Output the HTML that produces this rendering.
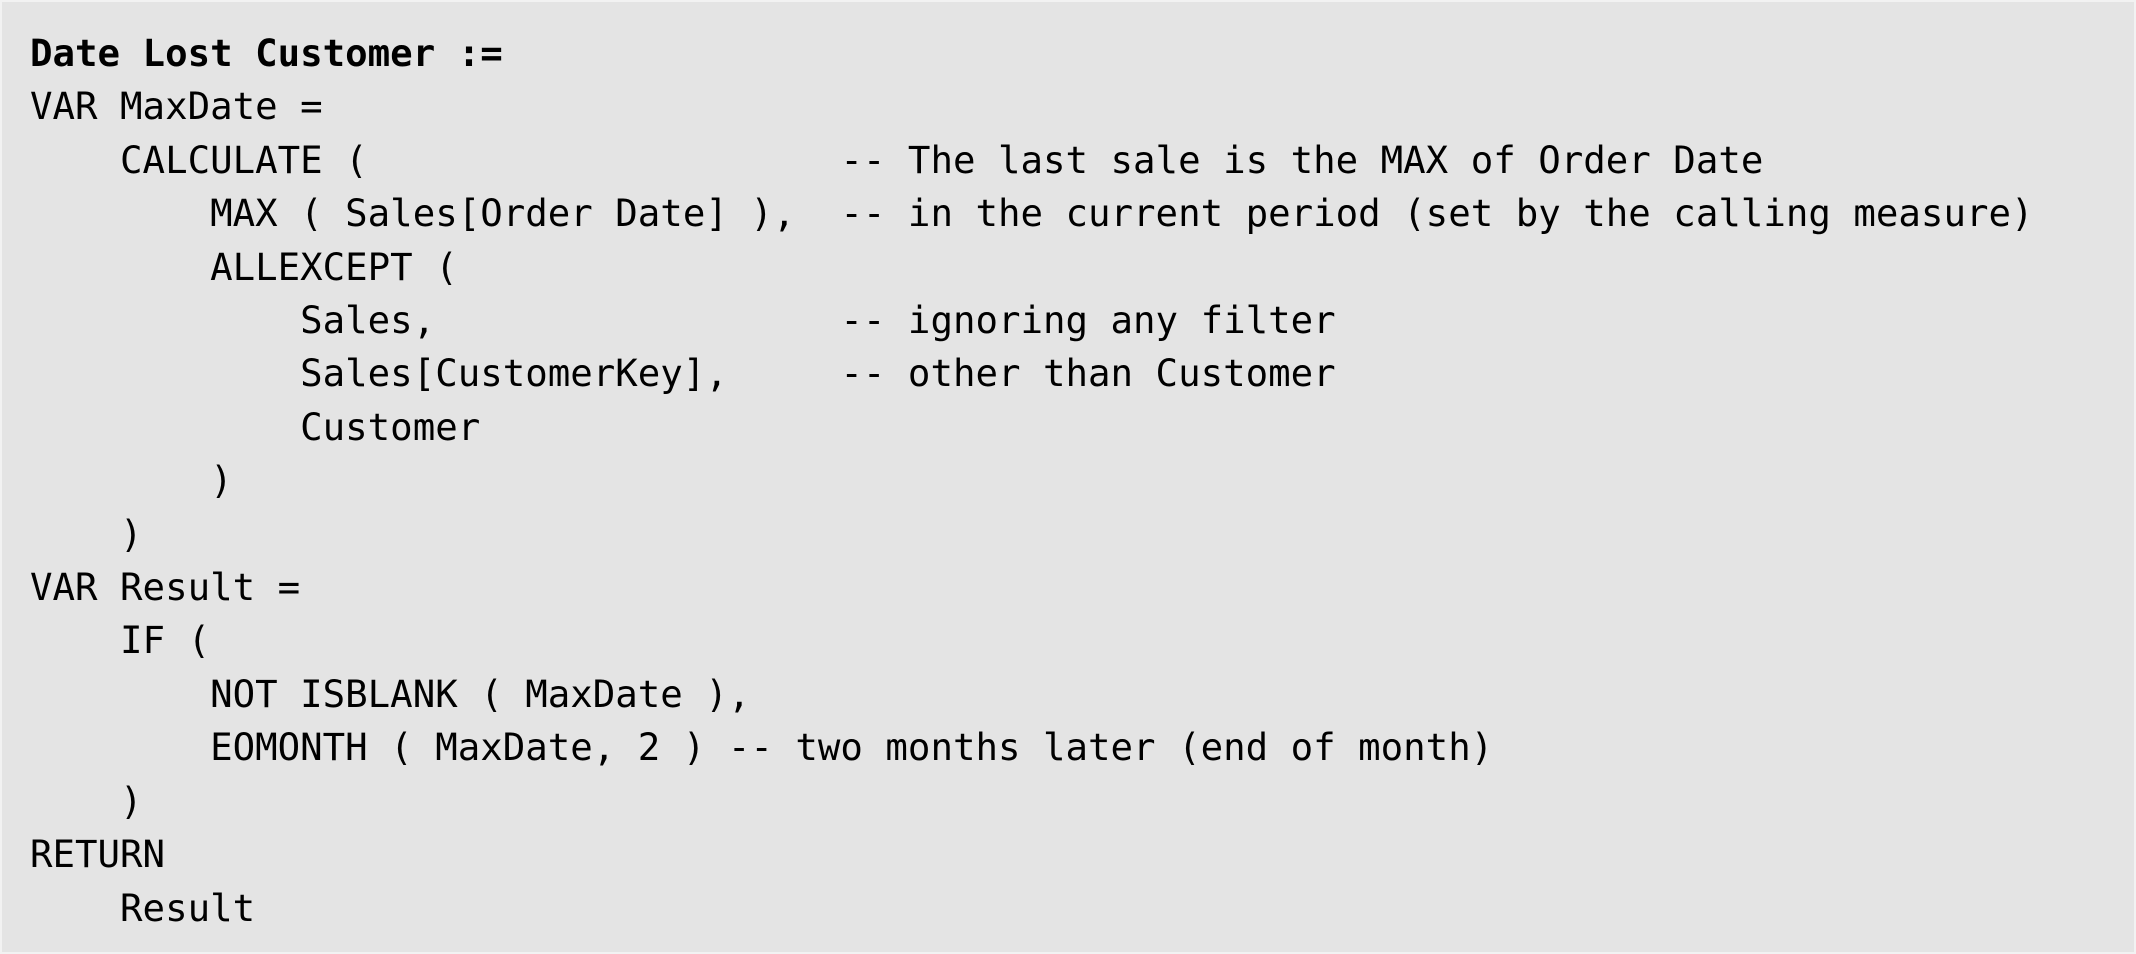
<!DOCTYPE html>
<html><head><meta charset="utf-8"><style>
html,body{margin:0;padding:0;}
body{width:2136px;height:954px;background:#f2f2f2;overflow:hidden;}
.box{position:absolute;left:2px;top:2px;width:2132px;height:950px;background:#e4e4e4;}
pre{margin:0;position:absolute;left:28px;top:25px;font-family:"DejaVu Sans Mono","Liberation Mono",monospace;font-size:37.4px;line-height:53.4px;color:#000;}
b{font-weight:bold;}
</style></head><body><div class="box"><pre><b>Date Lost Customer :=</b>
VAR MaxDate =
    CALCULATE (                     -- The last sale is the MAX of Order Date
        MAX ( Sales[Order Date] ),  -- in the current period (set by the calling measure)
        ALLEXCEPT (
            Sales,                  -- ignoring any filter
            Sales[CustomerKey],     -- other than Customer
            Customer
        )
    )
VAR Result =
    IF (
        NOT ISBLANK ( MaxDate ),
        EOMONTH ( MaxDate, 2 ) -- two months later (end of month)
    )
RETURN
    Result</pre></div></body></html>
